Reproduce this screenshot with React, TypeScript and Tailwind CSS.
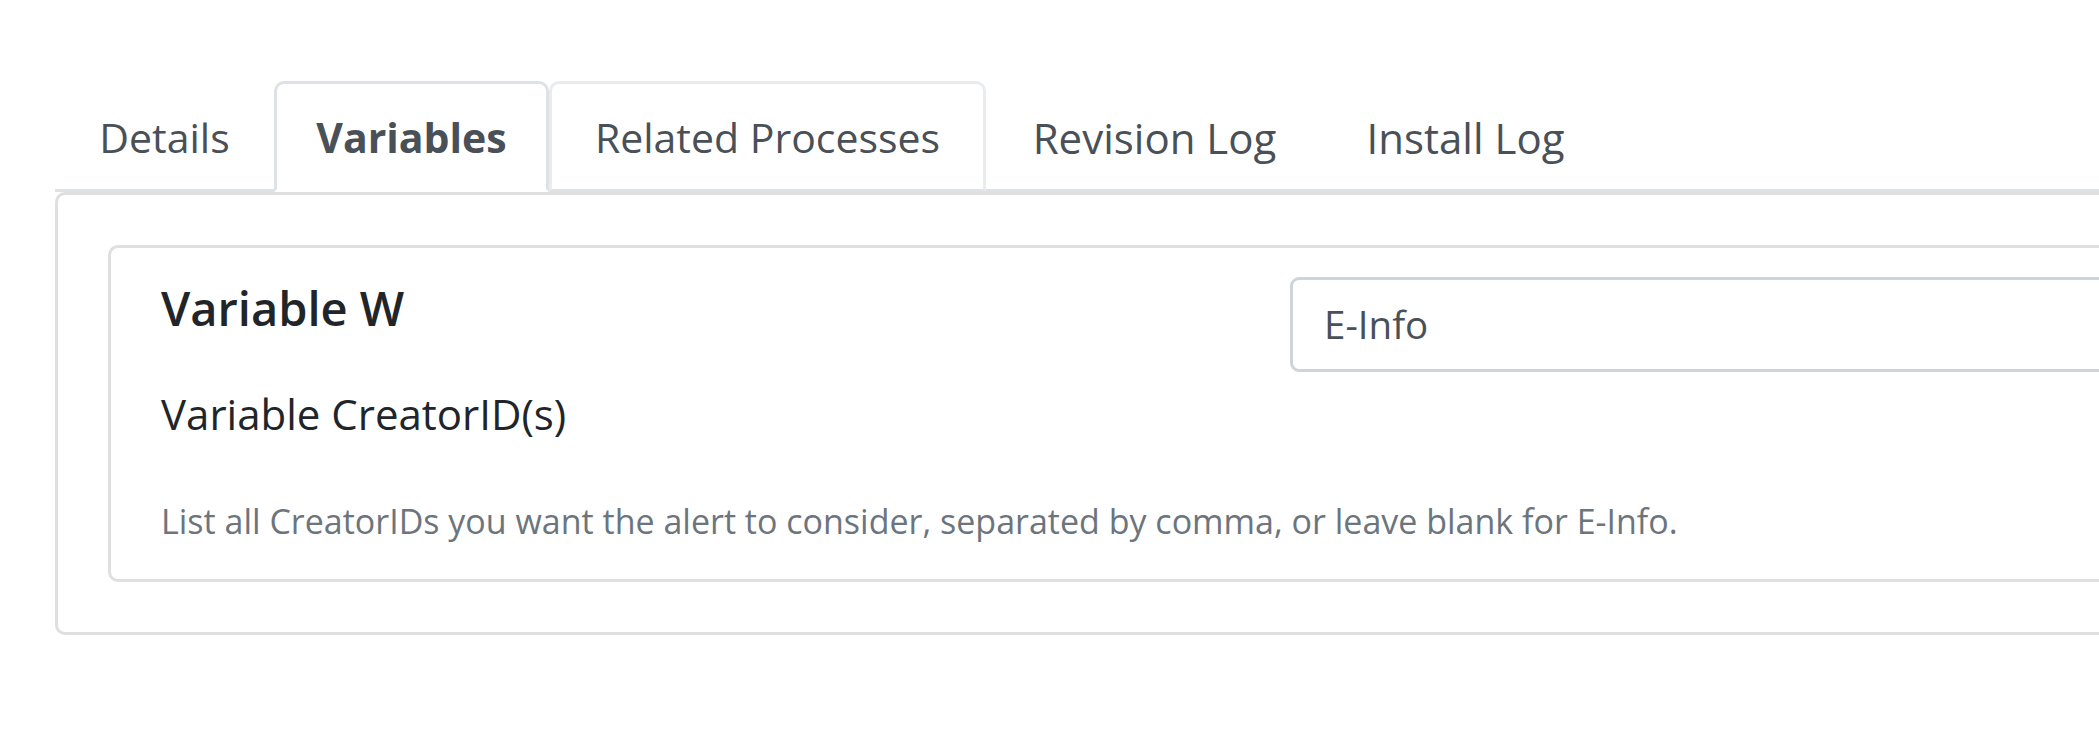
import React from "react";

const font = { fontFamily: '"Open Sans", "Noto Sans", sans-serif' };

export default function App() {
  return (
    <div className="w-full h-screen overflow-hidden bg-white" style={font}>
      <div className="w-[2400px] pl-[55px] pt-[81px]">
        {/* Tabs */}
        <div className="flex border-b-[3px] border-[#dee2e6]">
          <div className="-mb-[3px] flex h-[111px] w-[219px] items-center justify-center rounded-t-[10px] border-[3px] border-transparent pt-[2px] text-[41px] text-[#495057]">
            Details
          </div>
          <div className="-mb-[3px] flex h-[111px] w-[275px] items-center justify-center rounded-t-[10px] border-[3px] border-[#dee2e6] border-b-white bg-white pt-[2px] text-[41px] font-bold text-[#495057]">
            Variables
          </div>
          <div className="-mb-[3px] flex h-[111px] w-[437px] items-center justify-center rounded-t-[10px] border-[3px] border-[#e9ecef] border-b-[#dee2e6] pt-[2px] text-[41px] text-[#495057]">
            Related Processes
          </div>
          <div className="-mb-[3px] flex h-[111px] w-[337px] items-center justify-center rounded-t-[10px] border-[3px] border-transparent pt-[2px] text-[42px] text-[#495057]">
            Revision Log
          </div>
          <div className="-mb-[3px] flex h-[111px] w-[285px] items-center justify-center rounded-t-[10px] border-[3px] border-transparent pt-[2px] text-[42px] text-[#495057]">
            Install Log
          </div>
        </div>

        {/* Panel */}
        <div className="w-[2300px] rounded-[10px] border-[3px] border-[#dfdfdf] p-[50px]">
          {/* Card */}
          <div className="rounded-[10px] border-[3px] border-[#dfdfdf] px-[50px] pt-[30px] pb-[33px]">
            <div className="flex">
              <div className="flex w-[1129px] shrink-0 flex-col">
                <div className="h-[60px] text-[47px] font-semibold leading-[60px] text-[#212529]">
                  Variable W
                </div>
                <div className="mt-[46px] h-[60px] text-[42px] leading-[60px] text-[#212529]">
                  Variable CreatorID(s)
                </div>
              </div>
              <div className="flex-1 -mt-[1px]">
                <div className="flex h-[95px] w-full items-center rounded-[9px] border-[3px] border-[#ced4da] px-[31px] text-[38.5px] text-[#495057]">
                  E-Info
                </div>
              </div>
            </div>
            <div className="mt-[52px] h-[50px] whitespace-nowrap text-[34px] leading-[50px] text-[#6c757d]">
              List all CreatorIDs you want the alert to consider, separated by comma, or leave blank for E-Info.
            </div>
          </div>
        </div>
      </div>
    </div>
  );
}
